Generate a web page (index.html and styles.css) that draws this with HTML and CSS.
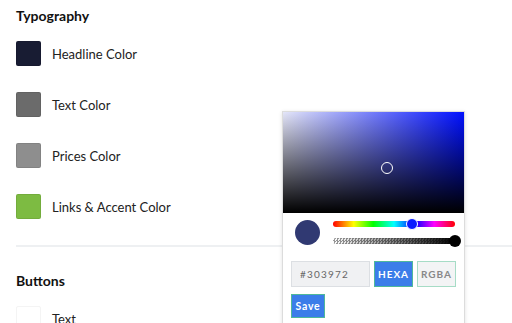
FILE: index.html
```html
<!DOCTYPE html>
<html lang="en">
<head>
    <meta charset="UTF-8">
    <meta name="viewport" content="width=device-width, initial-scale=1.0">
    <title>Theme Colors</title>
    <link rel="stylesheet" href="styles.css">
</head>
<body>
    <div class="page">
        <!-- Typography -->
        <div class="section">
            <h3>Typography</h3>
            <div class="color-list">
                <div class="color-row">
                    <span class="swatch swatch-headline"></span>
                    <span class="label">Headline Color</span>
                </div>
                <div class="color-row">
                    <span class="swatch swatch-text"></span>
                    <span class="label">Text Color</span>
                </div>
                <div class="color-row">
                    <span class="swatch swatch-prices"></span>
                    <span class="label">Prices Color</span>
                </div>
                <div class="color-row">
                    <span class="swatch swatch-links"></span>
                    <span class="label">Links &amp; Accent Color</span>
                </div>
            </div>
        </div>

        <div class="divider"></div>

        <!-- Buttons -->
        <div class="section">
            <h3>Buttons</h3>
            <div class="color-list">
                <div class="color-row">
                    <span class="swatch swatch-white"></span>
                    <span class="label">Text</span>
                </div>
            </div>
        </div>
    </div>

    <!-- Color picker popup -->
    <div class="picker">
        <div class="picker-area">
            <span class="picker-marker"></span>
        </div>
        <div class="picker-body">
            <div class="picker-controls">
                <span class="preview"></span>
                <div class="sliders">
                    <div class="slider hue">
                        <span class="thumb thumb-hue"></span>
                    </div>
                    <div class="slider alpha">
                        <span class="thumb thumb-alpha"></span>
                    </div>
                </div>
            </div>
            <div class="picker-inputs">
                <input class="hex-input" type="text" value="#303972">
                <button class="mode-btn active">HEXA</button>
                <button class="mode-btn">RGBA</button>
            </div>
            <button class="save-btn">Save</button>
        </div>
    </div>
</body>
</html>
```

FILE: styles.css
```css
body {
    font-family: Lato, "Open Sans", sans-serif;
    margin: 0;
    background-color: #fff;
    color: #222;
    overflow: hidden;
}
.page {
    padding: 7px 0 0 16px;
}
h3 {
    font-size: 14px;
    line-height: 18px;
    font-weight: bold;
    color: #111;
    margin: 0;
}
.color-list {
    display: flex;
    flex-direction: column;
    gap: 26px;
    margin-top: 16px;
}
.color-row {
    display: flex;
    align-items: center;
    gap: 11px;
}
.swatch {
    width: 25px;
    height: 25px;
    border-radius: 2px;
    box-sizing: border-box;
    border: 1px solid rgba(0,0,0,0.08);
}
.swatch-headline { background-color: #181c33; }
.swatch-text { background-color: #6b6b6b; }
.swatch-prices { background-color: #8e8e8e; }
.swatch-links { background-color: #7dbb42; }
.swatch-white { background-color: #fff; border-color: #f4f4f4; }
.label {
    font-size: 13px;
    color: #222;
}
.divider {
    height: 2px;
    background-color: #eef0f2;
    margin: 26px 0 25px 0;
}

/* picker popup */
.picker {
    position: absolute;
    left: 282px;
    top: 111px;
    width: 181px;
    height: 240px;
    background-color: #fff;
    border: 1px solid #dcdcdc;
    box-shadow: 0 1px 4px rgba(0,0,0,0.12);
}
.picker-area {
    position: relative;
    height: 101px;
    background:
        linear-gradient(to top, #000, rgba(0,0,0,0)),
        linear-gradient(to right, #e4e6f8, #0010ff);
}
.picker-marker {
    position: absolute;
    left: 98px;
    top: 50px;
    width: 10px;
    height: 10px;
    border: 1.5px solid #fff;
    border-radius: 50%;
}
.picker-body {
    padding: 7px 8px 0 8px;
}
.picker-controls {
    display: flex;
    align-items: center;
    gap: 13px;
    padding-left: 4px;
}
.preview {
    width: 25px;
    height: 25px;
    border-radius: 50%;
    background-color: #303972;
    flex-shrink: 0;
}
.sliders {
    display: flex;
    flex-direction: column;
    gap: 11px;
    width: 122px;
}
.slider {
    position: relative;
    height: 6px;
    border-radius: 3px;
}
.hue {
    background: linear-gradient(to right, #f00, #ff0 17%, #0f0 33%, #0ff 50%, #00f 67%, #f0f 83%, #f00);
}
.alpha {
    background:
        linear-gradient(to right, rgba(0,0,0,0), #000),
        repeating-conic-gradient(#999 0 25%, #fff 0 50%) 0 0 / 3px 3px;
}
.thumb {
    position: absolute;
    top: -3px;
    width: 12px;
    height: 12px;
    border-radius: 50%;
    margin-left: -6px;
    box-sizing: border-box;
}
.thumb-hue {
    left: 79px;
    background-color: #0a1cff;
    border: 1px solid #fff;
}
.thumb-alpha {
    left: 122px;
    background-color: #000;
}
.picker-inputs {
    display: flex;
    gap: 4px;
    margin-top: 16px;
}
.hex-input {
    width: 79px;
    height: 26px;
    box-sizing: border-box;
    border: 1px solid #dcdfe3;
    background-color: #f0f1f3;
    color: #666;
    font-family: Lato, sans-serif;
    font-size: 10px;
    letter-spacing: 1.2px;
    padding: 0 8px;
    outline: none;
}
.mode-btn {
    width: 39px;
    height: 26px;
    box-sizing: border-box;
    border: 1px solid #a6dcc6;
    background-color: #f3f4f5;
    color: #888;
    font-family: Lato, sans-serif;
    font-size: 10px;
    font-weight: bold;
    letter-spacing: 1px;
    padding: 0;
}
.mode-btn.active {
    background-color: #3b7de9;
    border-color: #4fb89a;
    color: #fff;
}
.save-btn {
    display: block;
    margin-top: 7px;
    width: 34px;
    height: 24px;
    padding: 0;
    border: 1px solid #4fb89a;
    background-color: #3b7de9;
    color: #fff;
    font-family: Lato, sans-serif;
    font-size: 10.5px;
    font-weight: bold;
    letter-spacing: 0.8px;
}
```
